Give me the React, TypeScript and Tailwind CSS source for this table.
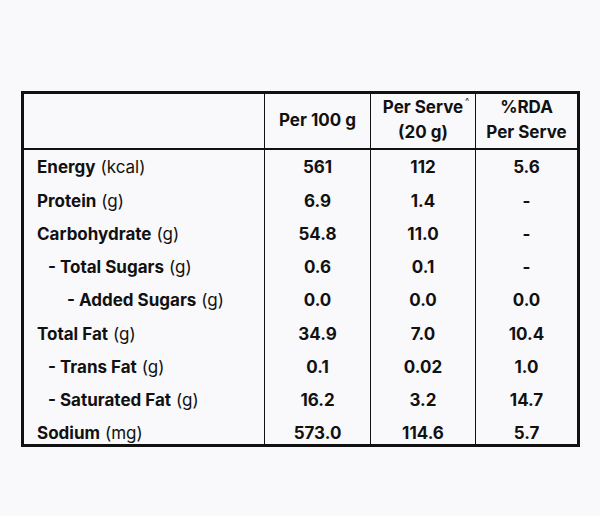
import React from "react";

type Row = {
  name: string;
  unit: string;
  indent: number;
  per100: string;
  perServe: string;
  rda: string;
};

const rows: Row[] = [
  { name: "Energy", unit: "(kcal)", indent: 0, per100: "561", perServe: "112", rda: "5.6" },
  { name: "Protein", unit: "(g)", indent: 0, per100: "6.9", perServe: "1.4", rda: "-" },
  { name: "Carbohydrate", unit: "(g)", indent: 0, per100: "54.8", perServe: "11.0", rda: "-" },
  { name: "- Total Sugars", unit: "(g)", indent: 1, per100: "0.6", perServe: "0.1", rda: "-" },
  { name: "- Added Sugars", unit: "(g)", indent: 2, per100: "0.0", perServe: "0.0", rda: "0.0" },
  { name: "Total Fat", unit: "(g)", indent: 0, per100: "34.9", perServe: "7.0", rda: "10.4" },
  { name: "- Trans Fat", unit: "(g)", indent: 1, per100: "0.1", perServe: "0.02", rda: "1.0" },
  { name: "- Saturated Fat", unit: "(g)", indent: 1, per100: "16.2", perServe: "3.2", rda: "14.7" },
  { name: "Sodium", unit: "(mg)", indent: 0, per100: "573.0", perServe: "114.6", rda: "5.7" },
];

const indentClass = ["pl-[13px]", "pl-[24px]", "pl-[43px]"];

export default function App() {
  return (
    <div
      className="w-[600px] h-[516px] bg-[#f9f9fb] pt-[91px] pl-[21px] text-[#111] text-[17px]"
      style={{ fontFamily: "Inter, 'Liberation Sans', sans-serif" }}
    >
      <div className="w-[559px] h-[356px] border-[3px] border-[#111] grid grid-cols-[240px_106px_105px_1fr] grid-rows-[56px_repeat(9,33.25px)] overflow-hidden">
        {/* header */}
        <div className="border-b-2 border-[#111]" />
        <div className="border-b-2 border-l-[1.5px] border-[#111] flex items-center justify-center font-bold">
          Per 100 g
        </div>
        <div className="border-b-2 border-l-[1.5px] border-[#111] flex flex-col items-center justify-center font-bold leading-[25px] pb-[2px]">
          <span className="relative">
            Per Serve
            <span className="absolute right-[-6px] top-[1px] text-[9px] font-normal leading-none">^</span>
          </span>
          <span>(20 g)</span>
        </div>
        <div className="border-b-2 border-l-[1.5px] border-[#111] flex flex-col items-center justify-center font-bold leading-[25px] pb-[2px]">
          <span>%RDA</span>
          <span>Per Serve</span>
        </div>

        {/* body */}
        {rows.map((r) => (
          <React.Fragment key={r.name}>
            <div className={`flex items-center pt-[3px] ${indentClass[r.indent]}`}>
              <span className="font-bold">{r.name}</span>
              <span className="ml-[5px]">{r.unit}</span>
            </div>
            <div className="border-l-[1.5px] border-[#111] flex items-center justify-center font-bold pt-[3px]">
              {r.per100}
            </div>
            <div className="border-l-[1.5px] border-[#111] flex items-center justify-center font-bold pt-[3px]">
              {r.perServe}
            </div>
            <div className="border-l-[1.5px] border-[#111] flex items-center justify-center font-bold pt-[3px]">
              {r.rda}
            </div>
          </React.Fragment>
        ))}
      </div>
    </div>
  );
}
